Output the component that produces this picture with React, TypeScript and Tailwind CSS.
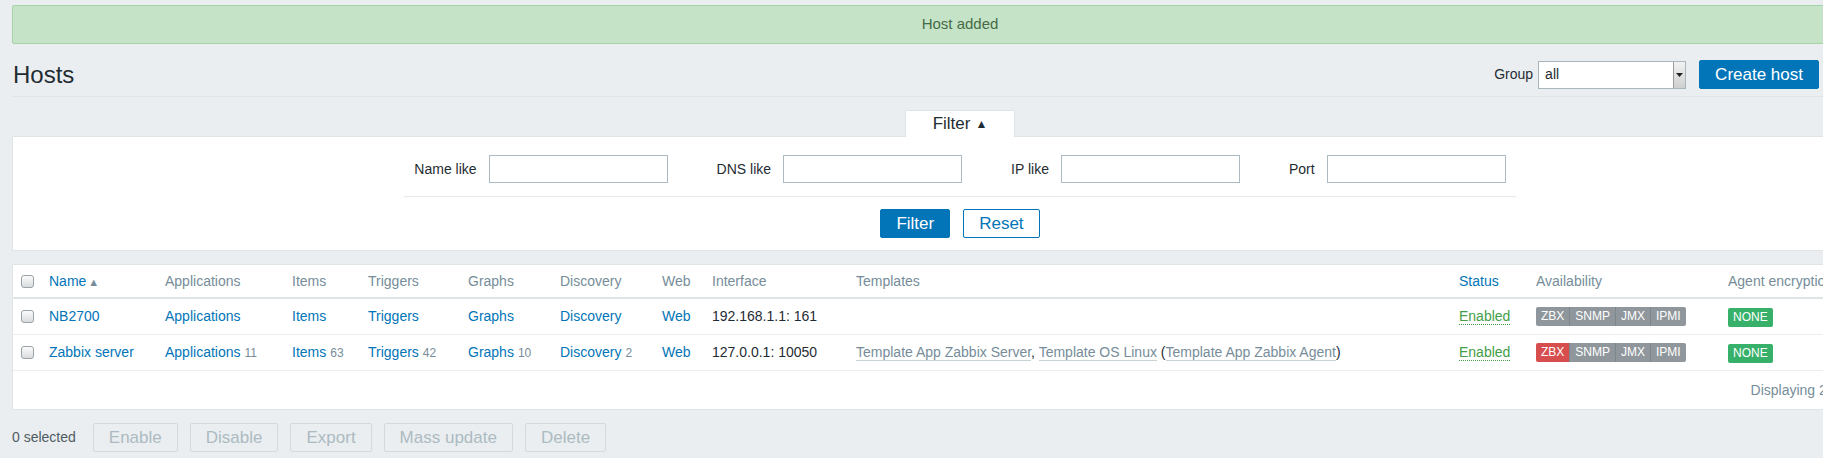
import React from 'react';

const font = "font-['Liberation_Sans',Arial,sans-serif]";

const cols =
  'grid grid-cols-[28px_116px_127px_76px_100px_92px_102px_50px_144px_603px_77px_192px_1fr] items-center';

function Checkbox() {
  return (
    <span className="block w-[13px] h-[13px] rounded-[3px] border border-[#9aa2a7] bg-gradient-to-b from-[#fbfbfb] to-[#d9dcde]" />
  );
}

function Btn({ label, kind }: { label: string; kind: 'main' | 'alt' | 'off' }) {
  const styles = {
    main: 'bg-[#0275b8] border-[#0275b8] text-white',
    alt: 'bg-white border-[#0275b8] text-[#0275b8]',
    off: 'bg-[#ebeef0] border-[#d3dade] text-[#acbbc2]',
  };
  return (
    <button
      className={`h-[29px] px-[15px] border rounded-[2px] text-[17px] leading-none ${styles[kind]}`}
    >
      {label}
    </button>
  );
}

function Link({ text, count }: { text: string; count?: number }) {
  return (
    <span className="whitespace-nowrap">
      <span className="text-[#0275b8]">{text}</span>
      {count !== undefined && <span className="ml-1 text-[12px] text-[#768d99]">{count}</span>}
    </span>
  );
}

function Availability({ zbxDown }: { zbxDown?: boolean }) {
  const items = ['ZBX', 'SNMP', 'JMX', 'IPMI'];
  return (
    <div className="flex h-[19px] rounded-[2px] overflow-hidden text-[12px] text-white leading-[19px] w-fit">
      {items.map((it, i) => (
        <span
          key={it}
          className={`px-[5px] ${i < 3 ? 'border-r border-[#7d868b]' : ''} ${
            zbxDown && it === 'ZBX' ? 'bg-[#d64e4e]' : 'bg-[#8f979c]'
          }`}
        >
          {it}
        </span>
      ))}
    </div>
  );
}

function Enabled() {
  return (
    <span className="text-[#429e47] border-b border-dotted border-[#429e47] leading-[15px]">Enabled</span>
  );
}

function TplLink({ text }: { text: string }) {
  return <span className="text-[#768d99] border-b border-[#c9d2d7]">{text}</span>;
}

function FilterField({ label, ml }: { label: string; ml?: string }) {
  return (
    <div className={`flex items-center ${ml ?? ''}`}>
      <span className="text-[14px] text-[#1f2c33] mr-[12px]">{label}</span>
      <div className="w-[179px] h-[28px] border border-[#acbbc2] bg-white" />
    </div>
  );
}

function NoneBadge() {
  return (
    <span className="inline-block h-[19px] leading-[19px] px-[5px] rounded-[2px] bg-[#37b06a] text-white text-[12px]">
      NONE
    </span>
  );
}

export default function App() {
  const headers = [
    'Applications',
    'Items',
    'Triggers',
    'Graphs',
    'Discovery',
    'Web',
    'Interface',
    'Templates',
  ];
  return (
    <div className={`w-full h-[458px] overflow-hidden bg-[#ebeef0] ${font} text-[#1f2c33]`}>
      <div className="w-[1920px] px-3 pt-[5px]">
        <div className="h-[39px] bg-[#c5e3c6] border border-[#a6d3a8] rounded-[2px] flex items-center justify-center text-[15px] text-[#466b47]">
          Host added
        </div>

        <div className="pt-4 pb-[7px] border-b border-[#dfe4e7] flex items-center justify-between pr-[89px]">
          <h1 className="text-[24px] leading-[28px] pl-px">Hosts</h1>
          <div className="flex items-center">
            <span className="text-[14px] mr-[5px]">Group</span>
            <div className="w-[148px] h-[28px] border border-[#a8b6bd] bg-white flex items-center">
              <span className="flex-1 pl-[6px] text-[14px]">all</span>
              <span className="w-[12px] h-full bg-gradient-to-b from-[#f2f2f2] to-[#cfcfcf] border-l border-[#9a9a9a] flex items-center justify-center">
                <svg width="7" height="4" viewBox="0 0 7 4">
                  <path d="M0 0h7L3.5 4z" fill="#222" />
                </svg>
              </span>
            </div>
            <div className="ml-[13px]">
              <Btn label="Create host" kind="main" />
            </div>
          </div>
        </div>

        <div className="mt-[13px]">
          <div className="relative z-10 mx-auto w-[110px] h-[27px] -mb-px bg-white border border-b-0 border-[#dfe4e7] rounded-t-[2px] flex items-center justify-center text-[17px]">
            Filter<span className="ml-[5px] text-[12px]">▲</span>
          </div>
          <div className="bg-white border border-[#dfe4e7] pt-[18px] pb-[12px]">
            <div className="flex justify-center">
              <FilterField label="Name like" />
              <FilterField label="DNS like" ml="ml-[49px]" />
              <FilterField label="IP like" ml="ml-[49px]" />
              <FilterField label="Port" ml="ml-[49px]" />
            </div>
            <div className="w-[1112px] h-px bg-[#e6e9eb] mx-auto mt-[13px]" />
            <div className="flex justify-center gap-[13px] mt-[12px]">
              <Btn label="Filter" kind="main" />
              <Btn label="Reset" kind="alt" />
            </div>
          </div>
        </div>

        <div className="mt-[13px] bg-white border border-[#dfe4e7] text-[14px]">
          <div className={`${cols} h-[34px] border-b-2 border-[#dfe4e7] text-[#768d99]`}>
            <div className="pl-2">
              <Checkbox />
            </div>
            <div className="pl-2 text-[#0275b8]">
              Name<span className="ml-[2px] text-[11px] text-[#768d99]">▲</span>
            </div>
            {headers.map((h) => (
              <div key={h} className="pl-2">
                {h}
              </div>
            ))}
            <div className="pl-2 text-[#0275b8]">Status</div>
            <div className="pl-2">Availability</div>
            <div className="pl-2 whitespace-nowrap">Agent encryption</div>
          </div>

          <div className={`${cols} h-[36px] border-b border-[#ebeef0]`}>
            <div className="pl-2">
              <Checkbox />
            </div>
            <div className="pl-2">
              <Link text="NB2700" />
            </div>
            <div className="pl-2">
              <Link text="Applications" />
            </div>
            <div className="pl-2">
              <Link text="Items" />
            </div>
            <div className="pl-2">
              <Link text="Triggers" />
            </div>
            <div className="pl-2">
              <Link text="Graphs" />
            </div>
            <div className="pl-2">
              <Link text="Discovery" />
            </div>
            <div className="pl-2">
              <Link text="Web" />
            </div>
            <div className="pl-2">192.168.1.1: 161</div>
            <div className="pl-2" />
            <div className="pl-2">
              <Enabled />
            </div>
            <div className="pl-2">
              <Availability />
            </div>
            <div className="pl-2">
              <NoneBadge />
            </div>
          </div>

          <div className={`${cols} h-[36px] border-b border-[#ebeef0]`}>
            <div className="pl-2">
              <Checkbox />
            </div>
            <div className="pl-2">
              <Link text="Zabbix server" />
            </div>
            <div className="pl-2">
              <Link text="Applications" count={11} />
            </div>
            <div className="pl-2">
              <Link text="Items" count={63} />
            </div>
            <div className="pl-2">
              <Link text="Triggers" count={42} />
            </div>
            <div className="pl-2">
              <Link text="Graphs" count={10} />
            </div>
            <div className="pl-2">
              <Link text="Discovery" count={2} />
            </div>
            <div className="pl-2">
              <Link text="Web" />
            </div>
            <div className="pl-2">127.0.0.1: 10050</div>
            <div className="pl-2 whitespace-nowrap">
              <TplLink text="Template App Zabbix Server" />, <TplLink text="Template OS Linux" /> (
              <TplLink text="Template App Zabbix Agent" />)
            </div>
            <div className="pl-2">
              <Enabled />
            </div>
            <div className="pl-2">
              <Availability zbxDown />
            </div>
            <div className="pl-2">
              <NoneBadge />
            </div>
          </div>

          <div className="h-[38px] flex items-center justify-end pr-[14px] text-[#768d99]">
            Displaying 2 of 2 found
          </div>
        </div>

        <div className="mt-[13px] flex items-center">
          <span className="text-[14px] text-[#4f5b61] mr-[17px]">0 selected</span>
          <div className="flex gap-[12px]">
            <Btn label="Enable" kind="off" />
            <Btn label="Disable" kind="off" />
            <Btn label="Export" kind="off" />
            <Btn label="Mass update" kind="off" />
            <Btn label="Delete" kind="off" />
          </div>
        </div>
      </div>
    </div>
  );
}
